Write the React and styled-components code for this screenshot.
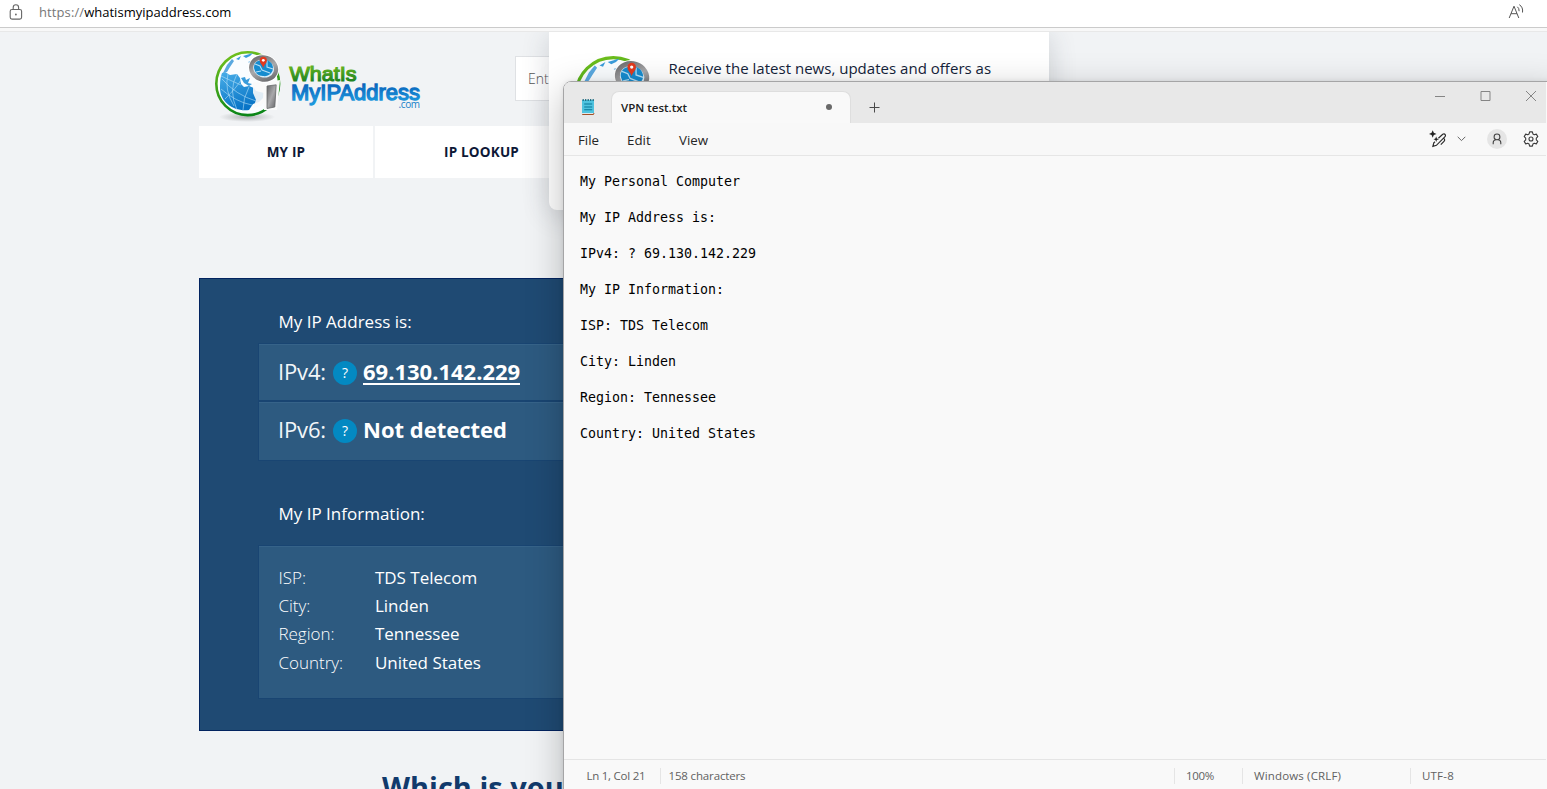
import React from "react";
import styled, { createGlobalStyle } from "styled-components";

const GlobalStyle = createGlobalStyle`
  * { box-sizing: border-box; }
  html, body { margin: 0; height: 100%; overflow: hidden; }
  body { font-family: "Open Sans", "Noto Sans", sans-serif; background: #f1f3f5; }
`;

const Screen = styled.div`
  position: relative;
  width: 1547px;
  height: 789px;
  overflow: hidden;
  display: flex;
  flex-direction: column;
`;

const Label = styled.span`
  white-space: pre;
  line-height: 1;
  font-size: ${(p) => p.$size || 14}px;
  letter-spacing: ${(p) => p.$track || 0}px;
  font-weight: ${(p) => p.$weight || 400};
  color: ${(p) => p.$color || "inherit"};
`;

/* ---------- browser ---------- */
const AddressBar = styled.header`
  flex: none;
  height: 28px;
  padding: 0 22px 3px 9px;
  display: flex;
  align-items: center;
  background: #fff;
  border-bottom: 1px solid #cbcbcb;
  svg { flex: none; }
`;
const Url = styled.div`
  flex: 1;
  padding-left: 16px;
  display: flex;
  color: #000;
`;
const BarGap = styled.div`
  flex: none;
  height: 4px;
  background: #f8f8f8;
  border-bottom: 1px solid #e8e8e8;
`;
const Page = styled.main`
  flex: 1;
  overflow: hidden;
  padding-left: 199px;
  background: #f1f3f5;
  display: flex;
  flex-direction: column;
`;
const SiteHeader = styled.div`
  flex: none;
  height: 94px;
  display: flex;
  align-items: flex-start;
  padding: 12px 0 0 11px;
`;
const SearchBox = styled.div`
  width: 240px;
  height: 45px;
  margin: 12px 0 0 85px;
  padding-left: 12px;
  display: flex;
  align-items: center;
  background: #fff;
  border: 1px solid #dfe1e4;
`;
const SiteNav = styled.nav`
  flex: none;
  height: 52px;
  display: flex;
  gap: 2px;
`;
const NavItem = styled.div`
  width: ${(p) => p.$width}px;
  padding-top: 2px;
  display: flex;
  align-items: center;
  justify-content: center;
  background: #fff;
`;
const IpPanel = styled.section`
  flex: none;
  height: 453px;
  width: 900px;
  margin-top: 100px;
  padding: 34px 0 0 58px;
  background: #1f4a73;
  border: 1px solid #02235f;
  color: #fff;
`;
const PanelTitle = styled.div`
  height: ${(p) => p.$height}px;
  padding: ${(p) => p.$top || 0}px 0 0 20.5px;
  display: flex;
`;
const Card = styled.div`
  background: #2d5a80;
  border: 1px solid #194572;
  box-shadow: inset 0 1px #366389;
`;
const AddressCard = styled(Card)`
  height: ${(p) => p.$height}px;
  padding: 0 0 ${(p) => p.$lift || 0}px 19px;
  display: flex;
  align-items: center;
`;
const Protocol = styled.span`
  width: 49px;
  padding-bottom: 2px;
  font-size: 22px;
  line-height: 22px;
  font-weight: 400;
  letter-spacing: -0.15px;
  color: #f2f6f9;
`;
const Help = styled.span`
  width: 24px;
  height: 24px;
  margin: 1px 6px 0 6px;
  border-radius: 50%;
  background: #0389c2;
  font-size: 14px;
  display: flex;
  align-items: center;
  justify-content: center;
`;
const IpValue = styled.span`
  font-size: 22px;
  line-height: 23px;
  font-weight: 700;
  border-bottom: 2px solid ${(p) => (p.$underlined ? "#fff" : "transparent")};
`;
const InfoCard = styled(Card)`
  height: 154px;
  padding: 17px 0 0 19.4px;
  display: flex;
  flex-direction: column;
`;
const InfoRow = styled.div`
  height: 28.35px;
  display: grid;
  grid-template-columns: 96.5px 1fr;
  align-items: center;
`;
const SectionHeading = styled.h2`
  flex: none;
  margin: 37px 0 0 183px;
  font-size: 29px;
  line-height: 38px;
  font-weight: 700;
  color: #113a6c;
  white-space: nowrap;
`;

/* ---------- newsletter popup ---------- */
const Popup = styled.aside`
  position: absolute;
  left: 549px;
  top: 32px;
  width: 500px;
  height: 178px;
  padding: 24px 0 0 26px;
  display: flex;
  align-items: flex-start;
  gap: 17.5px;
  background: #fff;
  border-radius: 0 0 8px 8px;
  box-shadow: 0 4px 28px rgba(50, 60, 75, 0.2);
  clip-path: inset(0 -50px -60px -50px);
`;
const PopupText = styled.div`
  padding-top: 1px;
  color: #14233a;
`;

/* ---------- notepad ---------- */
const Notepad = styled.section`
  position: absolute;
  left: 563px;
  top: 81px;
  width: 1000px;
  height: 724px;
  padding-right: 16px;
  border: 1px solid #a5a5a6;
  border-radius: 8px 0 0 0;
  overflow: hidden;
  background: #f9f9f9;
  display: flex;
  flex-direction: column;
`;
const NotepadShadow = styled.div`
  position: absolute;
  left: 563px;
  top: 81px;
  width: 1000px;
  height: 800px;
  border-radius: 8px;
  box-shadow: 0 10px 36px rgba(0, 0, 0, 0.25), 0 0 5px rgba(0, 0, 0, 0.08);
`;
const TitleBar = styled.div`
  flex: none;
  height: 41px;
  display: flex;
  background: #e8e8e8;
`;
const AppIcon = styled.div`
  width: 47px;
  padding: 16px 0 0 18px;
  background: #e8e8e8;
`;
const Tab = styled.div`
  width: 240px;
  height: 32px;
  margin-top: 9px;
  padding: 0 18px 0 9px;
  display: flex;
  align-items: center;
  justify-content: space-between;
  background: #f9f9f9;
  border: 1px solid #dedede;
  border-bottom: 0;
  border-radius: 8px 8px 0 0;
`;
const Unsaved = styled.i`
  width: 6px;
  height: 6px;
  margin-top: -1px;
  border-radius: 50%;
  background: #696969;
`;
const NewTab = styled.div`
  flex: 1;
  display: flex;
  align-items: flex-start;
  padding: 20px 0 0 18px;
`;
const WindowButtons = styled.div`
  display: flex;
  align-items: flex-start;
  gap: 33.5px;
  padding: 8px 9px 0 0;
`;
const MenuBar = styled.div`
  flex: none;
  height: 33px;
  padding: 0 7px 0 14px;
  display: flex;
  align-items: center;
  background: #f8f8f8;
  border-bottom: 1px solid #e6e6e6;
  color: #262626;
`;
const MenuItem = styled(Label)`
  width: ${(p) => p.$width}px;
  padding-top: 3px;
`;
const Tools = styled.div`
  margin-left: auto;
  display: flex;
  align-items: center;
`;
const AiTools = styled.div`
  display: flex;
  align-items: center;
  gap: 10px;
`;
const Avatar = styled.div`
  width: 20px;
  height: 20px;
  margin: 0 16px 0 21px;
  border-radius: 50%;
  background: #e5e5e5;
  display: flex;
  align-items: center;
  justify-content: center;
`;
const Editor = styled.div`
  flex: 1;
  padding: 8px 0 0 16px;
  font: 13.29px/36px "DejaVu Sans Mono", "Liberation Mono", monospace;
  color: #000;
  white-space: pre;
`;
const StatusBar = styled.div`
  flex: none;
  height: 45px;
  padding: 8px 0 0 12px;
  display: flex;
  border-top: 1px solid #e5e5e5;
  background: #f9f9f9;
  color: #616161;
`;
const StatusCell = styled.div`
  width: ${(p) => p.$width}px;
  height: 16px;
  padding-left: ${(p) => p.$pad || 11}px;
  display: flex;
  align-items: center;
  border-right: ${(p) => (p.$last ? 0 : "1px solid #e5e5e5")};
`;

function Globe({ id }) {
  return (
    <g>
      <defs>
        <linearGradient id={id + "g"} x1="0" y1="0" x2="0.3" y2="1">
          <stop offset="0" stopColor="#79c51d" />
          <stop offset="1" stopColor="#0c8618" />
        </linearGradient>
        <linearGradient id={id + "b"} x1="0" y1="0" x2="0.4" y2="1">
          <stop offset="0" stopColor="#49aee8" />
          <stop offset="1" stopColor="#0874c6" />
        </linearGradient>
        <linearGradient id={id + "m"} x1="0" y1="0" x2="1" y2="1">
          <stop offset="0" stopColor="#656567" />
          <stop offset="0.5" stopColor="#a9a9ab" />
          <stop offset="1" stopColor="#606063" />
        </linearGradient>
        <radialGradient id={id + "s"}>
          <stop offset="0" stopColor="#717579" stopOpacity="0.5" />
          <stop offset="1" stopColor="#717579" stopOpacity="0" />
        </radialGradient>
      </defs>
      <ellipse cx="37" cy="73" rx="28" ry="5" fill={`url(#${id}s)`} />
      <circle cx="37.7" cy="39.7" r="31.4" fill="#fafdff" stroke={`url(#${id}g)`} strokeWidth="2.6" />
      <path
        d="M12 29 L15 28 L20 31 L27 30 L30 34 L31 40 L34 43 L39 42 L44 44 L46 47 L50 48 L54 49 L53 54 L49 58 L43 60 L39 66 C24 68 9 58 10 42 Q10 34 12 29Z"
        fill={`url(#${id}b)`}
      />
      <path d="M13 29 L17 21 L22 15 L24 17 L20 23 L17 28Z" fill="#5aa9e0" />
      <path d="M33 12 L43 9 L40 12 L36 14Z M26 15 L31 12 L29 16Z M38 18 L41 17 L42 20Z M31 34 L35 33 L36 36 L40 34 L38 39 L42 40 L39 42 L34 39Z" fill="#3a9cdb" />
      <path
        d="M12 35 Q26 51 46 57 M18 30 Q14 46 24 62 M27 30 Q18 46 27 66 M11 45 Q26 58 42 61 M39 43 Q33 54 33 66 M11 32 Q24 38 31 41 M15 55 Q27 43 31 36"
        fill="none"
        stroke="#b4e0f8"
        strokeWidth="0.7"
        opacity="0.85"
      />
      <path d="M43 38 L55 39 L55 56 L51 62 L43 64 L46 56 L43 49Z" fill="#fafafa" opacity="0.9" />
      <path d="M53 42 L58 38 L70 36 L67 66 L54 66Z" fill="#fafafa" />
      <path d="M57 42 L66.2 40.8 L64.8 63 L57 64.5Z" fill={`url(#${id}m)`} stroke="#67696b" strokeWidth="0.8" />
      <ellipse cx="53.6" cy="24.5" rx="12.6" ry="11" fill="#d9eefa" stroke="#fff" strokeWidth="6" transform="rotate(18 53.6 24.5)" />
      <ellipse cx="53.6" cy="24.5" rx="12.6" ry="11" fill="#d9eefa" stroke={`url(#${id}m)`} strokeWidth="4.2" transform="rotate(18 53.6 24.5)" />
      <path d="M44 24 C44 18 48 16 53 16 C58 15 63 19 63 24 C63 29 58 33 53 32 C48 32 45 29 44 24Z" fill="#168ccf" />
      <path d="M45 20 L50 22 L52 26 L60 29 M57 17 L57 23 L63 25 M46 28 L51 27" fill="none" stroke="#b4dff6" strokeWidth="1.1" />
      <path d="M53.2 24 C52.2 20.5 49.7 19.5 49.7 16.3 A3.6 3.6 0 0 1 56.9 16.3 C56.9 19.5 54.2 20.5 53.2 24Z" fill="#e23a1e" />
      <circle cx="53.3" cy="16.3" r="1.4" fill="#fff" />
    </g>
  );
}

function SiteLogo() {
  return (
    <svg width="220" height="78" viewBox="0 0 220 78">
      <defs>
        <linearGradient id="wordGreen" x1="0" y1="0" x2="0" y2="1">
          <stop offset="0.25" stopColor="#5fae20" />
          <stop offset="0.85" stopColor="#1b8121" />
        </linearGradient>
        <linearGradient id="wordBlue" x1="0" y1="0" x2="0" y2="1">
          <stop offset="0.2" stopColor="#0b67bd" />
          <stop offset="0.85" stopColor="#1b96dc" />
        </linearGradient>
      </defs>
      <Globe id="site" />
      <g fontFamily="Liberation Sans, Arial, sans-serif">
        <text x="79.5" y="37" fontSize="21" stroke="url(#wordGreen)" strokeWidth="1.2" fill="url(#wordGreen)" textLength="67" lengthAdjust="spacingAndGlyphs">WhatIs</text>
        <text x="81" y="55.5" fontSize="21.5" stroke="url(#wordBlue)" strokeWidth="1.3" fill="url(#wordBlue)" textLength="129" lengthAdjust="spacingAndGlyphs">MyIPAddress</text>
      </g>
      <text x="188.5" y="63.5" fontSize="10" fontFamily="Open Sans, sans-serif" fill="#1680c8" textLength="21.5">.com</text>
    </svg>
  );
}

const LockIcon = () => (
  <svg width="14" height="17" viewBox="0 0 14 17" fill="none" stroke="#666" strokeWidth="1.1">
    <rect x="1.2" y="5.5" width="11.4" height="9.6" rx="1.8" />
    <path d="M4.2 5.5V3.5a2.7 2.7 0 0 1 5.4 0v2" />
    <circle cx="6.9" cy="10.5" r="0.9" fill="#666" stroke="none" />
  </svg>
);

const ReadAloudIcon = () => (
  <svg width="17" height="16" viewBox="0 0 17 16" fill="none" stroke="#555" strokeWidth="1">
    <path d="M1.2 14 L6 2.2 L10.8 14 M3 9.7 H9" />
    <path d="M9.4 2.8 Q11.3 4.3 11.1 7.2 M11.3 0.7 Q15.3 3.1 14.5 8.5" />
  </svg>
);

const NotepadIcon = () => (
  <svg width="13" height="18" viewBox="0 0 13 18">
    <rect x="0" y="2" width="12" height="13.3" fill="#4fc3df" />
    <path d="M0.2 15.8H12" stroke="#eee" strokeWidth="1" />
    <path d="M0.2 16.5H11.5L12 15" stroke="#a35027" strokeWidth="1" fill="none" />
    <path d="M2.2 6H10.2M2.2 9H10.2M2.2 11.7H10.2" stroke="#087899" strokeWidth="1.1" />
    <path d="M1.2 1V3M3.7 1V3M6.2 1V3M8.7 1V3M11.2 1V3" stroke="#17677d" strokeWidth="1.2" />
  </svg>
);

const PlusIcon = () => (
  <svg width="11" height="11" viewBox="0 0 11 11" stroke="#4a4a4a">
    <path d="M5.5 0.5V10.5M0.5 5.5H10.5" />
  </svg>
);

const RewriteIcon = () => (
  <svg width="18" height="18" viewBox="0 0 18 18" fill="none" stroke="#2b2b2b" strokeWidth="1.2">
    <path d="M3.7 0.2 L4.8 2.8 L7.5 3.9 L4.8 5 L3.7 7.7 L2.6 5 L0 3.9 L2.6 2.8Z" fill="#222" stroke="none" />
    <path d="M7.2 6.5 L7.9 8.5 L10 9.3 L7.9 10.1 L7.2 12 L6.4 10.1 L4.5 9.3 L6.4 8.5Z" fill="#222" stroke="none" />
    <path d="M9.4 8.2 L13.7 4.2 Q15.5 3.4 16.3 4.8 Q16.9 6 15.8 6.9 L7.4 15.3 L3.9 16.3 L4.8 12.8 L6 11.7 M14.6 8.2 L15.5 9.2 Q16 10.4 15 11.4 L11.8 14.7" />
  </svg>
);

const ChevronIcon = () => (
  <svg width="9" height="6" viewBox="0 0 9 6" fill="none" stroke="#666" strokeWidth="1">
    <path d="M0.7 0.8 L4.5 4.6 L8.3 0.8" />
  </svg>
);

const PersonIcon = () => (
  <svg width="10" height="12" viewBox="0 0 10 12" fill="none" stroke="#424242" strokeWidth="1.1">
    <circle cx="5" cy="3.9" r="2.9" />
    <path d="M1.2 11.2V9.7Q1.2 7.3 3.6 6.8M8.8 11.2V9.7Q8.8 7.3 6.4 6.8" />
  </svg>
);

const GearIcon = () => (
  <svg width="16" height="16" viewBox="0 0 16 16" fill="none" stroke="#3b3b3b" strokeWidth="1.1" strokeLinejoin="round">
    <path d="M6.6 0.9 H9.4 L9.9 2.9 L11.3 3.7 L13.3 3.1 L14.8 5.6 L13.3 7.1 V8.9 L14.8 10.4 L13.3 12.9 L11.3 12.3 L9.9 13.1 L9.4 15.1 H6.6 L6.1 13.1 L4.7 12.3 L2.7 12.9 L1.2 10.4 L2.7 8.9 V7.1 L1.2 5.6 L2.7 3.1 L4.7 3.7 L6.1 2.9Z" />
    <circle cx="8" cy="8" r="2" />
  </svg>
);

const WindowIcon = ({ d }) => (
  <svg width="12" height="12" viewBox="0 0 12 12" fill="none" stroke="#858585" strokeWidth="1">
    <path d={d} />
  </svg>
);

const info = [
  ["ISP:", "TDS Telecom"],
  ["City:", "Linden"],
  ["Region:", "Tennessee"],
  ["Country:", "United States"],
];

const note = [
  "My Personal Computer",
  "My IP Address is:",
  "IPv4: ? 69.130.142.229",
  "My IP Information:",
  "ISP: TDS Telecom",
  "City: Linden",
  "Region: Tennessee",
  "Country: United States",
];

export default function App() {
  return (
    <Screen>
      <GlobalStyle />
      <AddressBar>
        <LockIcon />
        <Url>
          <Label $size={13} $color="#777" $track={0.1}>https://</Label>
          <Label $size={13} $track={0.02}>whatismyipaddress.com</Label>
        </Url>
        <ReadAloudIcon />
      </AddressBar>
      <BarGap />
      <Page>
        <SiteHeader>
          <SiteLogo />
          <SearchBox><Label $size={14} $weight={300} $color="#555">Enter</Label></SearchBox>
        </SiteHeader>
        <SiteNav>
          <NavItem $width={174}><Label $size={13.5} $weight={700} $track={0.2} $color="#0d1836">MY IP</Label></NavItem>
          <NavItem $width={213}><Label $size={13.5} $weight={700} $track={0.2} $color="#0d1836">IP LOOKUP</Label></NavItem>
        </SiteNav>
        <IpPanel>
          <PanelTitle $height={30}><Label $size={17}>My IP Address is:</Label></PanelTitle>
          <AddressCard $height={58}>
            <Protocol>IPv4:</Protocol>
            <Help>?</Help>
            <IpValue $underlined>69.130.142.229</IpValue>
          </AddressCard>
          <AddressCard $height={60} $lift={2}>
            <Protocol>IPv6:</Protocol>
            <Help>?</Help>
            <IpValue>Not detected</IpValue>
          </AddressCard>
          <PanelTitle $height={84} $top={44}><Label $size={17}>My IP Information:</Label></PanelTitle>
          <InfoCard>
            {info.map(([name, value]) => (
              <InfoRow key={name}>
                <Label $size={17} $weight={300}>{name}</Label>
                <Label $size={17}>{value}</Label>
              </InfoRow>
            ))}
          </InfoCard>
        </IpPanel>
        <SectionHeading>Which is your</SectionHeading>
      </Page>
      <Popup>
        <svg width="76" height="80" viewBox="0 0 76 80">
          <g transform="translate(-6.2 -8.2) scale(1.18)"><Globe id="popup" /></g>
        </svg>
        <PopupText><Label $size={15} $track={0.02}>Receive the latest news, updates and offers as</Label></PopupText>
      </Popup>
      <NotepadShadow />
      <Notepad>
        <TitleBar>
          <AppIcon><NotepadIcon /></AppIcon>
          <Tab>
            <Label $size={11.5} $weight={600} $color="#202020">VPN test.txt</Label>
            <Unsaved />
          </Tab>
          <NewTab><PlusIcon /></NewTab>
          <WindowButtons>
            <WindowIcon d="M1 6.5H11" />
            <WindowIcon d="M1 1.5H10V10.5H1Z" />
            <WindowIcon d="M1 1L11 11M11 1L1 11" />
          </WindowButtons>
        </TitleBar>
        <MenuBar>
          <MenuItem $size={13.3} $width={49}>File</MenuItem>
          <MenuItem $size={13.3} $width={52}>Edit</MenuItem>
          <MenuItem $size={13.3} $width={50}>View</MenuItem>
          <Tools>
            <AiTools>
              <RewriteIcon />
              <ChevronIcon />
            </AiTools>
            <Avatar><PersonIcon /></Avatar>
            <GearIcon />
          </Tools>
        </MenuBar>
        <Editor>{note.map((line) => <div key={line}>{line}</div>)}</Editor>
        <StatusBar>
          <StatusCell $width={85} $pad={10.5}><Label $size={11.5} $track={-0.25}>Ln 1, Col 21</Label></StatusCell>
          <StatusCell $width={514} $pad={7.5}><Label $size={11.5} $track={-0.15}>158 characters</Label></StatusCell>
          <StatusCell $width={68}><Label $size={11.5} $track={-0.3}>100%</Label></StatusCell>
          <StatusCell $width={168}><Label $size={11.5} $track={0.15}>Windows (CRLF)</Label></StatusCell>
          <StatusCell $width={100} $last><Label $size={11.5} $track={0.2}>UTF-8</Label></StatusCell>
        </StatusBar>
      </Notepad>
    </Screen>
  );
}
